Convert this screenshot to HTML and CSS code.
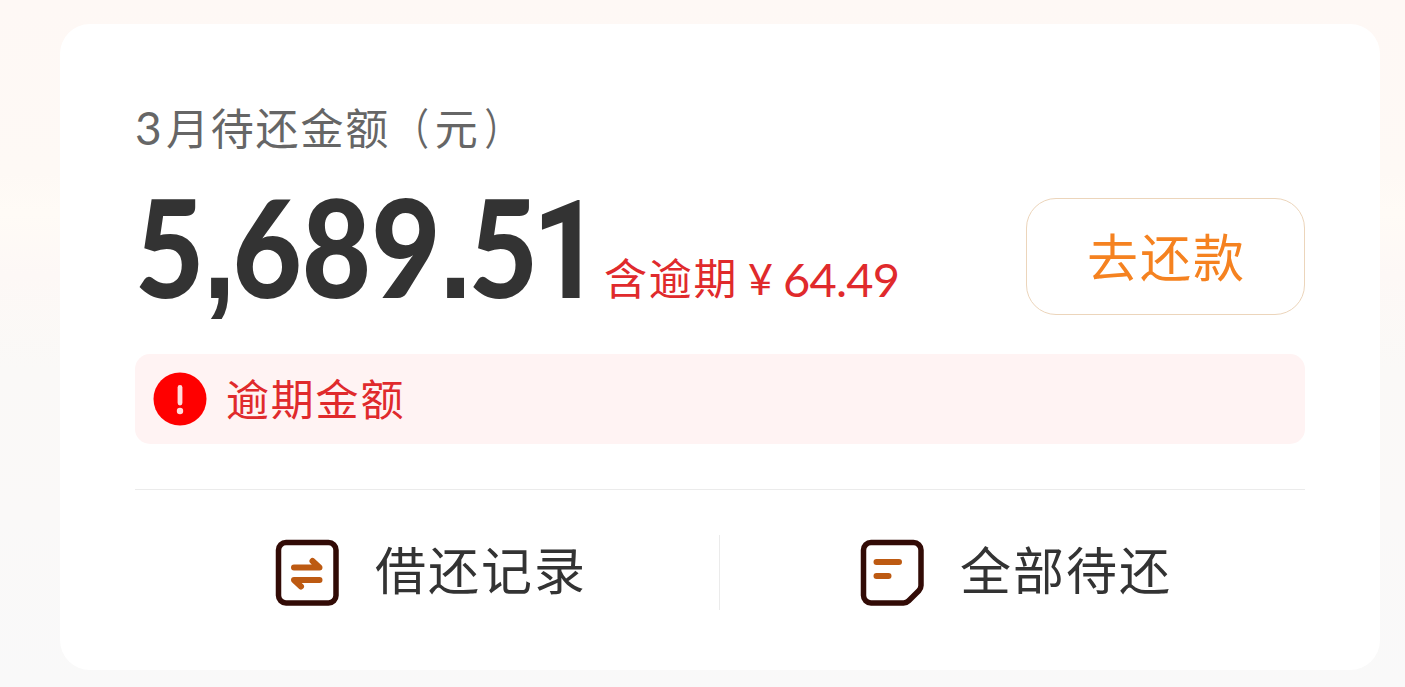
FILE: index.html
```html
<!DOCTYPE html>
<html lang="zh-CN">
<head>
<meta charset="utf-8">
<title>待还金额</title>
<link rel="stylesheet" href="styles.css">
</head>
<body>
<main class="card">
  <h1 class="title"><span class="month">3</span>月待还金额<span class="paren">（</span>元<span class="paren">）</span></h1>
  <section class="summary">
    <div class="amount"><span class="amount-value">5<span class="mark">,</span>689<span class="mark">.</span>5<span class="plain">1</span></span></div>
    <div class="overdue"><span class="overdue-label">含逾期</span><span class="yen">¥</span><span class="overdue-value">64.49</span></div>
    <button class="repay">去还款</button>
  </section>
  <section class="alert">
    <svg class="alert-icon" viewBox="0 0 54 54"><circle cx="27" cy="27" r="26.5" fill="#f00"/><path d="M27 15.500v15.500" stroke="#ffdcdc" stroke-width="4.800" stroke-linecap="round"/><circle cx="27" cy="39" r="3.200" fill="#ffdcdc"/></svg>
    <span class="alert-text">逾期金额</span>
  </section>
  <nav class="links">
    <a class="link">
      <svg class="link-icon" viewBox="0 0 64 68" fill="none" stroke-linecap="round" stroke-linejoin="round"><rect x="3.500" y="3.500" width="57.500" height="60.500" rx="7.500" stroke="#320b06" stroke-width="5.500"/><path d="M19 28.500h25.500L37.500 22M44.500 41h-25.500l7 6.500" stroke="#bd5a12" stroke-width="6"/></svg>
      <span class="link-text">借还记录</span>
    </a>
    <a class="link link-all">
      <svg class="link-icon" viewBox="0 0 64 68" fill="none" stroke-linecap="round" stroke-linejoin="round"><path d="M11 3.500h42.500a7.500 7.500 0 0 1 7.500 7.500v35.500q0 3-2.200 5.200L48.700 61.800Q46.500 64 43.500 64H11a7.500 7.500 0 0 1-7.500-7.500V11A7.500 7.500 0 0 1 11 3.500z" stroke="#320b06" stroke-width="5.500"/><path d="M16.500 23h22.500M16.500 37h12" stroke="#bd5a12" stroke-width="6"/></svg>
      <span class="link-text">全部待还</span>
    </a>
  </nav>
</main>
</body>
</html>
```
FILE: styles.css
```css
* { box-sizing: border-box; }
body {
  margin: 0;
  height: 687px;
  padding: 24px 25px 17px 60px;
  overflow: hidden;
  background: linear-gradient(180deg, #fef8f5 0%, #fef9f5 25%, #fffbf6 31%, #fdf8f6 40%, #faf9f7 54%, #faf9f8 75%, #f9f9f9 100%);
  font-family: "Noto Sans CJK SC", sans-serif;
  color: #333;
}
.card {
  height: 646px;
  padding: 75px 75px 0;
  border-radius: 30px;
  background: #fff;
}
.title {
  display: flex;
  margin: 0;
  height: 62px;
  line-height: 55px;
  font-size: 43px;
  font-weight: 400;
  letter-spacing: 1.8px;
  color: #666;
}
.month { width: 31px; font-family: Lato, sans-serif; font-size: 46px; line-height: 58px; }
.paren { transform: scaleX(.8); }
.summary {
  display: flex;
  height: 193px;
}
.amount { width: 469px; }
.amount-value {
  display: inline-block;
  line-height: 169px;
  font-family: Lato, sans-serif;
  font-size: 136px;
  font-weight: 900;
  transform: scaleX(.88);
  transform-origin: left;
}
.mark { margin-left: -2px; font-family: "Liberation Sans", sans-serif; font-weight: 700; line-height: 1; letter-spacing: -4px; }
.plain { margin-left: -7px; font-family: Roboto, sans-serif; font-size: 138px; font-weight: 700; line-height: 1; }
.overdue {
  display: flex;
  flex: 1;
  padding-top: 88px;
  line-height: 55px;
  font-size: 43px;
  letter-spacing: 1.8px;
  color: #e02a2c;
}
.overdue-label { width: 144px; }
.yen { width: 35px; font-family: Lato, sans-serif; line-height: 60px; }
.overdue-value { font-family: Lato, sans-serif; font-size: 47px; line-height: 60px; letter-spacing: -.8px; }
.repay {
  width: 279px;
  height: 117px;
  margin-top: 37px;
  padding: 0 0 4px 2px;
  border: 1px solid #ecd5bb;
  border-radius: 30px;
  background: #fff;
  font: 400 51px "Noto Sans CJK SC", sans-serif;
  letter-spacing: 2px;
  color: #f58220;
}
.alert {
  display: flex;
  align-items: center;
  gap: 19px;
  height: 90px;
  padding: 0 18px;
  border-radius: 15px;
  background: #fff3f3;
}
.alert-icon { width: 54px; height: 54px; }
.alert-text { font-size: 43px; line-height: 60px; padding-bottom: 5px; letter-spacing: 1.8px; color: #e02a2c; }
.links {
  display: grid;
  grid-template-columns: 1fr 1fr;
  margin-top: 45px;
  padding-top: 45px;
  border-top: 1px solid #ebebeb;
}
.link {
  display: flex;
  align-items: center;
  height: 75px;
  padding-left: 140px;
  gap: 36px;
  border-right: 1px solid #ebebeb;
}
.link-all { border-right: 0; }
.link-icon { width: 64px; height: 68px; }
.link-text { font-size: 51px; line-height: 66px; padding-bottom: 9px; letter-spacing: 2px; }
```
